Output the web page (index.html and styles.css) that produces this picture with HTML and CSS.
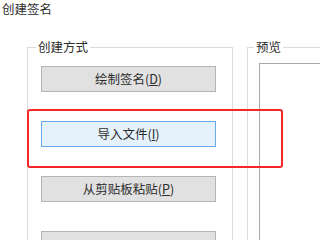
FILE: index.html
```html
<!DOCTYPE html>
<html>
<head>
	<meta charset="UTF-8">
	<title>创建签名</title>
	<link rel="stylesheet" href="styles.css">
</head>
<body>
	<div class="title">创建签名</div>
	<div class="groups">
		<fieldset class="mode">
			<legend>创建方式</legend>
			<div class="buttons">
				<button>绘制签名(<u>D</u>)</button>
				<button class="focus">导入文件(<u>I</u>)</button>
				<button>从剪贴板粘贴(<u>P</u>)</button>
				<button>&nbsp;</button>
			</div>
		</fieldset>
		<fieldset class="preview">
			<legend>预览</legend>
			<div class="canvas"></div>
		</fieldset>
	</div>
	<div class="mark"></div>
</body>
</html>
```

FILE: styles.css
```css
html, body { margin: 0; height: 100%; overflow: hidden; background: #fff; }
body { position: relative; padding: 2px 0 0 2px; box-sizing: border-box; font-family: "Noto Sans CJK SC", "Liberation Sans", sans-serif; font-size: 12.5px; line-height: 14px; color: #2c2c2c; }
.title { height: 14px; }
.groups { display: flex; gap: 14px; margin: 24px 0 0 25px; }
fieldset { margin: 0; border: 1px solid #dcdcdc; border-bottom: none; min-width: 0; }
legend { padding: 0 2px; margin-left: -5px; }
.mode { width: 206px; box-sizing: border-box; height: 200px; padding: 12px 15px 0 13px; }
.buttons { height: 174px; overflow: hidden; display: flex; flex-direction: column; gap: 29px; }
.buttons button { flex: none; width: 175px; height: 26px; box-sizing: border-box; border: 1px solid #b4b4b4; background: #e1e1e1; font: inherit; color: inherit; padding: 0; text-align: center; }
.buttons button.focus { border-color: #66aae8; background: #e5f1fb; }
.preview { flex: 1; height: 200px; box-sizing: border-box; padding: 9px 0 0 11px; border-right: none; }
.canvas { height: 177px; border: 1px solid #a8a8a8; border-right: none; border-bottom: none; }
.mark { position: absolute; left: 27px; top: 109px; width: 256px; height: 59px; box-sizing: border-box; border: 2px solid #f52828; border-radius: 3px; }
```
